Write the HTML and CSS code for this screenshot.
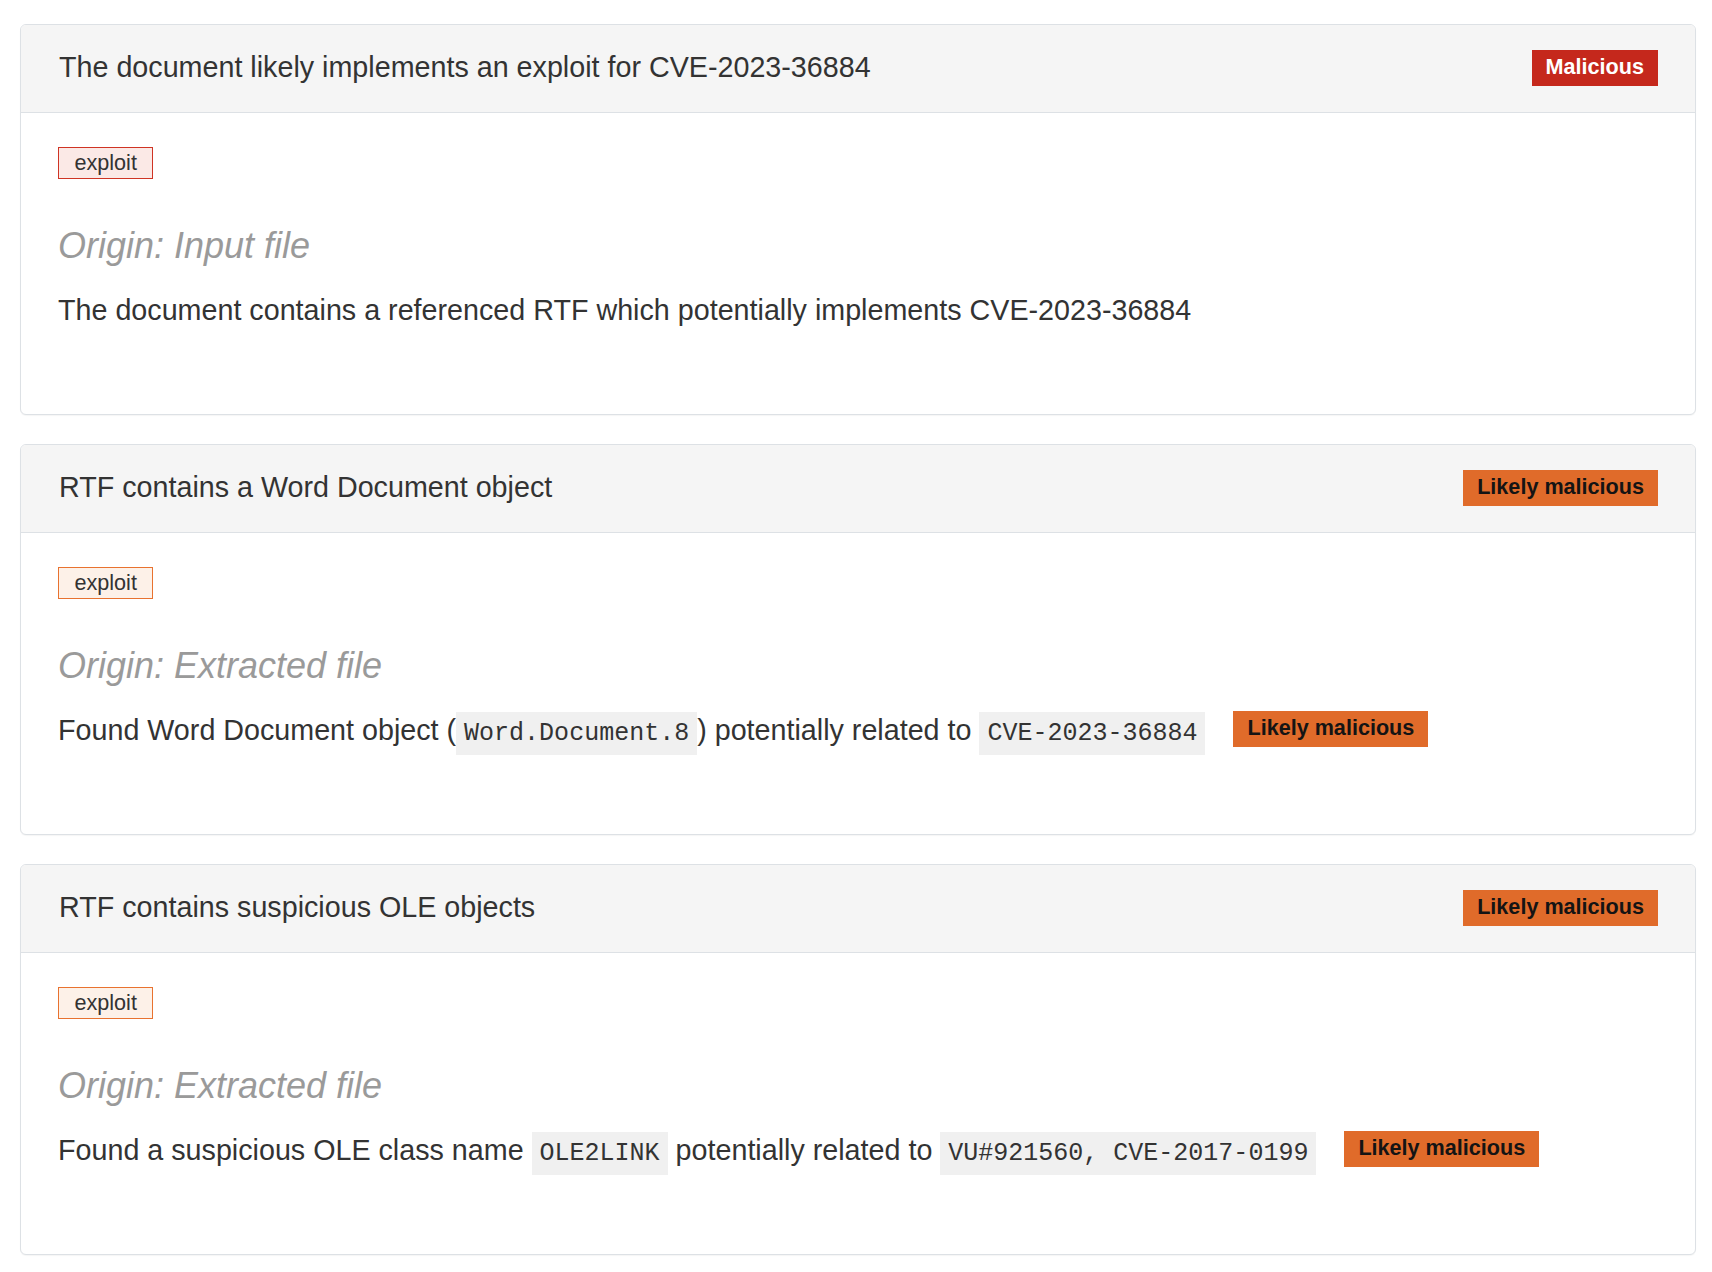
FILE: index.html
```html
<!DOCTYPE html>
<html lang="en">
<head>
<meta charset="utf-8">
<title>Signatures</title>
<link rel="stylesheet" href="styles.css">
</head>
<body>
<div class="page">
  <section class="card">
    <header class="card-head">
      <h3 class="card-title">The document likely implements an exploit for CVE-2023-36884</h3>
      <span class="badge badge-mal">Malicious</span>
    </header>
    <div class="card-body">
      <div class="tags"><span class="tag tag-red">exploit</span></div>
      <h4 class="origin">Origin: Input file</h4>
      <p class="desc">The document contains a referenced RTF which potentially implements CVE-2023-36884</p>
    </div>
  </section>

  <section class="card">
    <header class="card-head">
      <h3 class="card-title">RTF contains a Word Document object</h3>
      <span class="badge badge-likely">Likely malicious</span>
    </header>
    <div class="card-body">
      <div class="tags"><span class="tag tag-orange">exploit</span></div>
      <h4 class="origin">Origin: Extracted file</h4>
      <p class="desc">Found Word Document object (<code class="code">Word.Document.8</code>) potentially related to <code class="code">CVE-2023-36884</code> <span class="badge badge-likely badge-inline">Likely malicious</span></p>
    </div>
  </section>

  <section class="card">
    <header class="card-head">
      <h3 class="card-title">RTF contains suspicious OLE objects</h3>
      <span class="badge badge-likely">Likely malicious</span>
    </header>
    <div class="card-body">
      <div class="tags"><span class="tag tag-orange">exploit</span></div>
      <h4 class="origin">Origin: Extracted file</h4>
      <p class="desc">Found a suspicious OLE class name <code class="code">OLE2LINK</code> potentially related to <code class="code">VU#921560, CVE-2017-0199</code> <span class="badge badge-likely badge-inline">Likely malicious</span></p>
    </div>
  </section>
</div>
</body>
</html>
```

FILE: styles.css
```css
html, body {
  margin: 0;
  padding: 0;
  background: #ffffff;
}

body {
  font-family: "Liberation Sans", Arial, sans-serif;
  color: #333333;
}

.page {
  padding: 24px 16px 0 20px;
}

.card {
  border: 1px solid #dde1e5;
  border-radius: 6px;
  margin-bottom: 29px;
  overflow: hidden;
  background: #ffffff;
  box-shadow: 0 1px 1px rgba(0, 0, 0, 0.04);
}

.card-head {
  display: flex;
  align-items: center;
  justify-content: space-between;
  padding: 22px 37px 24px 38px;
  background: #f5f5f5;
  border-bottom: 1px solid #dde1e5;
}

.card-title {
  margin: 0;
  font-size: 28.7px;
  line-height: 41px;
  font-weight: normal;
  color: #333333;
}

.badge {
  display: inline-block;
  font-size: 21.6px;
  font-weight: bold;
  line-height: 26px;
  padding: 4px 14px 6px;
  white-space: nowrap;
}

.badge-mal {
  background: #c5281c;
  color: #ffffff;
}

.badge-likely {
  background: #e06b2a;
  color: #141414;
}

.badge-inline {
  margin: -8px 0 -8px 20px;
  vertical-align: 5px;
}

.card-body {
  padding: 34px 37px 83.5px;
}

.tags {
  display: flex;
}

.tag {
  display: inline-block;
  border: 1px solid;
  padding: 0 15.5px;
  font-size: 21.6px;
  line-height: 30px;
  color: #333333;
}

.tag-red {
  border-color: #cf3424;
  background: #fbe9e6;
}

.tag-orange {
  border-color: #e8722f;
  background: #fdf1e8;
}

.origin {
  margin: 46.5px 0 24px;
  font-size: 36px;
  line-height: 40px;
  font-style: italic;
  font-weight: normal;
  color: #9a9a9a;
}

.desc {
  margin: 0;
  font-size: 28.7px;
  line-height: 41px;
}

.code {
  font-family: "Liberation Mono", "DejaVu Sans Mono", monospace;
  font-size: 25px;
  line-height: 20px;
  background: #f0f0f0;
  color: #333333;
  padding: 7px 8px;
}
```
